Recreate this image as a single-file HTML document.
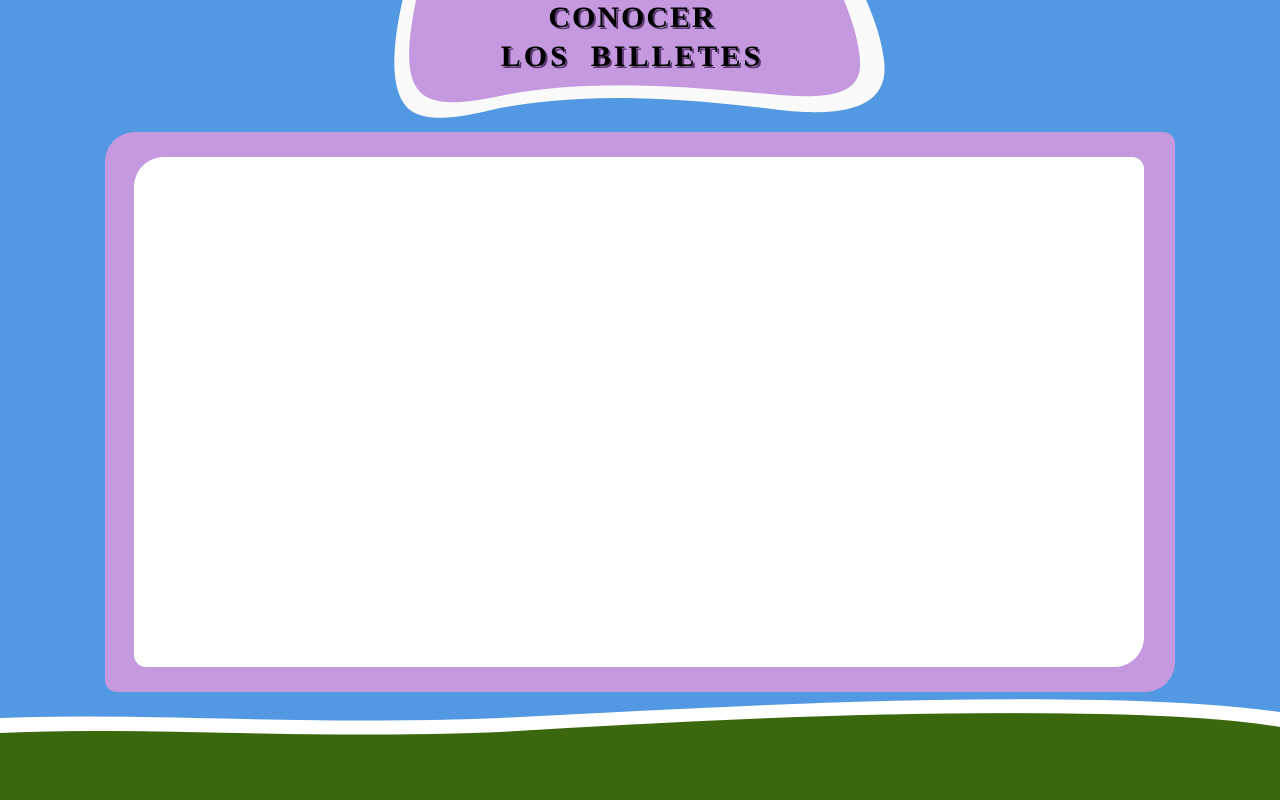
<!DOCTYPE html>
<html><head><meta charset="utf-8"><style>
html,body{margin:0;padding:0;width:1280px;height:800px;overflow:hidden;background:#5298e2;}
.panel{position:absolute;left:105px;top:132px;width:1070px;height:560px;background:#c499df;border-radius:30px 12px 30px 12px;}
.inner{position:absolute;left:134px;top:157px;width:1010px;height:510px;background:#fff;border-radius:30px 12px 30px 12px;}
svg{position:absolute;left:0;top:0;}
.t{position:absolute;left:382px;width:500px;text-align:center;font-family:"Liberation Serif",serif;font-weight:bold;font-size:30px;color:#000;letter-spacing:3px;text-shadow:2px 2px 0 #5a3a70;line-height:1;}
</style></head><body>
<svg width="1280" height="800">
<path d="M405,-10 C395,30 385,90 410,110 C430,125 470,115 500,108 C600,90 700,100 780,110 C850,118 890,105 884,60 C880,30 870,10 862,-10 Z" fill="#fafafa"/>
<path d="M418,-10 C410,30 400,80 425,96 C445,108 480,100 510,94 C600,78 700,88 780,95 C840,100 862,90 860,60 C858,35 850,15 840,-10 Z" fill="#c499df"/>
<path d="M0,718 C150,712 300,726 500,718 C700,708 900,696 1100,700 C1200,702 1250,708 1280,712 L1280,800 L0,800 Z" fill="#fff"/>
<path d="M0,733 C150,726 300,740 500,732 C700,720 900,710 1100,714 C1200,716 1250,722 1280,727 L1280,800 L0,800 Z" fill="#3b670d"/>
</svg>
<div class="panel"></div>
<div class="inner"></div>
<div class="t" style="top:3px;letter-spacing:2px;">CONOCER</div>
<div class="t" style="top:42px;">LOS&nbsp; BILLETES</div>
</body></html>
